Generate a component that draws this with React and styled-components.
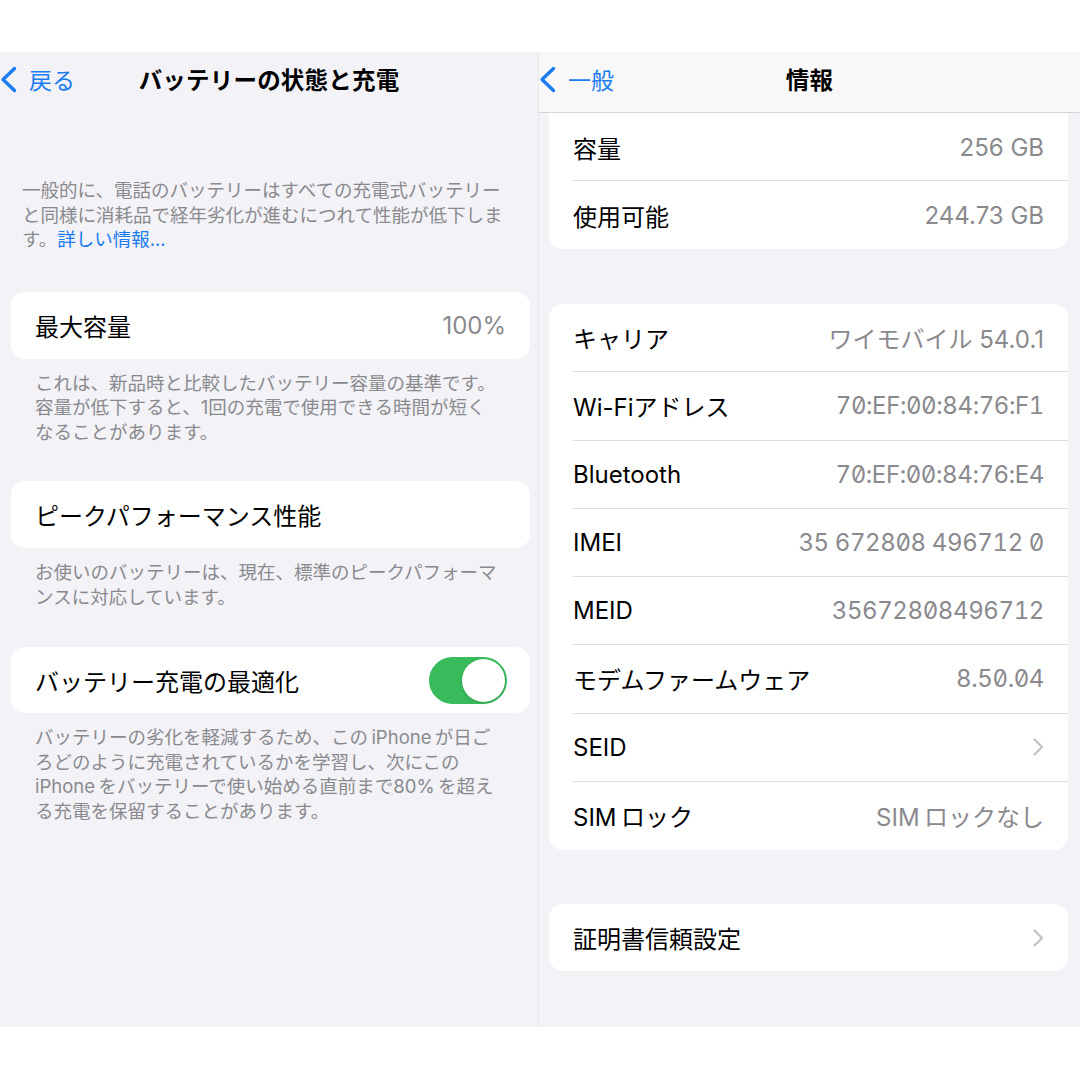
import React from "react";
import styled, { createGlobalStyle } from "styled-components";

const Global = createGlobalStyle`
  html, body { margin: 0; padding: 0; background: #ffffff; }
  body {
    font-family: Inter, "Noto Sans CJK JP", "Noto Sans", sans-serif;
    -webkit-font-smoothing: antialiased;
  }
`;

const BLUE = "#1a7cf0";
const GRAY_TEXT = "#8a8a8e";

const Page = styled.div`
  width: 1080px;
  height: 1080px;
  box-sizing: border-box;
  padding-top: 52px;
  background: #fff;
`;

const Split = styled.div`
  display: flex;
  height: 975px;
`;

const Panel = styled.section`
  width: ${(p) => p.$w}px;
  flex-shrink: 0;
  box-sizing: border-box;
  background: #f2f2f7;
  display: flex;
  flex-direction: column;
  overflow: hidden;
  border-left: ${(p) => (p.$divider ? "1px solid #e7e7ec" : "none")};
`;

const NavBar = styled.header`
  height: 61px;
  flex-shrink: 0;
  box-sizing: border-box;
  display: grid;
  grid-template-columns: 1fr auto 1fr;
  align-items: center;
  padding-bottom: 6px;
  background: ${(p) => (p.$solid ? "#f8f8f8" : "transparent")};
  border-bottom: 1px solid ${(p) => (p.$solid ? "#d5d5d8" : "transparent")};
  position: relative;
  z-index: 2;
`;

const BackButton = styled.div`
  display: flex;
  align-items: center;
  gap: ${(p) => p.$gap}px;
  color: ${BLUE};
  font-size: 23px;
  justify-self: start;
`;

const NavTitle = styled.h1`
  margin: 0;
  font-size: 23.5px;
  font-weight: 700;
  color: #000;
  letter-spacing: 0.2px;
`;

const Content = styled.div`
  flex: 1;
  display: flex;
  flex-direction: column;
  overflow: hidden;
`;

const Intro = styled.p`
  margin: 65px 0 0;
  padding: 0 22px;
  font-size: 18.5px;
  line-height: 24.5px;
  color: ${GRAY_TEXT};
`;

const Link = styled.span`
  color: ${BLUE};
`;

const Group = styled.div`
  margin-top: ${(p) => p.$mt}px;
  display: flex;
  flex-direction: column;
`;

const Card = styled.div`
  background: #fff;
  border-radius: 14px;
  margin: ${(p) => p.$m};
  padding-top: ${(p) => p.$pt || 0}px;
  overflow: hidden;
`;

const Row = styled.div`
  display: flex;
  height: ${(p) => p.$h}px;
  padding-left: 24px;
  box-sizing: border-box;
  &:last-child > div {
    border-bottom: none;
  }
`;

const RowInner = styled.div`
  flex: 1;
  display: flex;
  align-items: center;
  justify-content: space-between;
  padding-right: ${(p) => p.$pr ?? 24}px;
  border-bottom: 1px solid #dcdce0;
`;

const Label = styled.span`
  font-size: 24px;
  color: #000;
`;

const Value = styled.span`
  font-size: 24px;
  color: ${GRAY_TEXT};
  font-feature-settings: ${(p) => (p.$mono ? '"zero" 1, "tnum" 1' : "normal")};
  letter-spacing: ${(p) => (p.$mono ? "-0.4px" : "0")};
`;

const Footer = styled.p`
  margin: 0;
  padding: 12px 35px 0;
  font-size: 18.5px;
  line-height: 24.5px;
  color: ${GRAY_TEXT};
`;

const ToggleTrack = styled.div`
  width: 78px;
  height: 47px;
  border-radius: 24px;
  background: #38bb5b;
  position: relative;
  flex-shrink: 0;
`;

const ToggleKnob = styled.div`
  position: absolute;
  top: 2px;
  right: 2px;
  width: 43px;
  height: 43px;
  border-radius: 50%;
  background: #fff;
  box-shadow: 0 1px 3px rgba(0, 0, 0, 0.18);
`;

const BackChevron = () => (
  <svg width="17" height="27" viewBox="0 0 17 27">
    <polyline
      points="14.5,2.5 3,13.5 14.5,24.5"
      fill="none"
      stroke={BLUE}
      strokeWidth="3.4"
      strokeLinecap="round"
      strokeLinejoin="round"
    />
  </svg>
);

const Disclosure = () => (
  <svg width="12" height="20" viewBox="0 0 12 20">
    <polyline
      points="2.5,2.5 10,10 2.5,17.5"
      fill="none"
      stroke="#c4c4c7"
      strokeWidth="2.4"
      strokeLinecap="round"
      strokeLinejoin="round"
    />
  </svg>
);

const Toggle = () => (
  <ToggleTrack>
    <ToggleKnob />
  </ToggleTrack>
);

const T = "\u2009";

const infoRows = [
  { label: "キャリア", value: "ワイモバイル 54.0.1" },
  { label: "Wi-Fiアドレス", value: "70:EF:00:84:76:F1", mono: true },
  { label: "Bluetooth", value: "70:EF:00:84:76:E4", mono: true },
  { label: "IMEI", value: "35 672808 496712 0", mono: true },
  { label: "MEID", value: "35672808496712", mono: true },
  { label: "モデムファームウェア", value: "8.50.04", mono: true },
  { label: "SEID", chevron: true },
  { label: `SIM${T}ロック`, value: `SIM${T}ロックなし` },
];

const LEFT_CARD = "0 8px 0 11px";
const RIGHT_CARD = "0 12px 0 10px";

export default function App() {
  return (
    <>
      <Global />
      <Page>
        <Split>
          <Panel $w={538}>
            <NavBar>
              <BackButton $gap={12}>
                <BackChevron />
                <span>戻る</span>
              </BackButton>
              <NavTitle>バッテリーの状態と充電</NavTitle>
              <span />
            </NavBar>
            <Content>
              <Intro>
                一般的に、電話のバッテリーはすべての充電式バッテリー
                <br />
                と同様に消耗品で経年劣化が進むにつれて性能が低下しま
                <br />
                す。<Link>詳しい情報...</Link>
              </Intro>

              <Group $mt={40}>
                <Card $m={LEFT_CARD}>
                  <Row $h={67}>
                    <RowInner>
                      <Label>最大容量</Label>
                      <Value>100%</Value>
                    </RowInner>
                  </Row>
                </Card>
                <Footer>
                  これは、新品時と比較したバッテリー容量の基準です。
                  <br />
                  容量が低下すると、1回の充電で使用できる時間が短く
                  <br />
                  なることがあります。
                </Footer>
              </Group>

              <Group $mt={37}>
                <Card $m={LEFT_CARD}>
                  <Row $h={67}>
                    <RowInner>
                      <Label>ピークパフォーマンス性能</Label>
                    </RowInner>
                  </Row>
                </Card>
                <Footer>
                  お使いのバッテリーは、現在、標準のピークパフォーマ
                  <br />
                  ンスに対応しています。
                </Footer>
              </Group>

              <Group $mt={38}>
                <Card $m={LEFT_CARD}>
                  <Row $h={66}>
                    <RowInner $pr={23}>
                      <Label>バッテリー充電の最適化</Label>
                      <Toggle />
                    </RowInner>
                  </Row>
                </Card>
                <Footer>
                  バッテリーの劣化を軽減するため、この{T}iPhone{T}が日ご
                  <br />
                  ろどのように充電されているかを学習し、次にこの
                  <br />
                  iPhone{T}をバッテリーで使い始める直前まで80%{T}を超え
                  <br />
                  る充電を保留することがあります。
                </Footer>
              </Group>
            </Content>
          </Panel>

          <Panel $w={542} $divider>
            <NavBar $solid>
              <BackButton $gap={12}>
                <BackChevron />
                <span>一般</span>
              </BackButton>
              <NavTitle>情報</NavTitle>
              <span />
            </NavBar>
            <Content>
              <Group $mt={-12}>
                <Card $m={RIGHT_CARD} $pt={13}>
                  <Row $h={67}>
                    <RowInner>
                      <Label>容量</Label>
                      <Value>256 GB</Value>
                    </RowInner>
                  </Row>
                  <Row $h={68}>
                    <RowInner>
                      <Label>使用可能</Label>
                      <Value>244.73 GB</Value>
                    </RowInner>
                  </Row>
                </Card>
              </Group>

              <Group $mt={55}>
                <Card $m={RIGHT_CARD}>
                  {infoRows.map((r) => (
                    <Row key={r.label} $h={68.25}>
                      <RowInner>
                        <Label>{r.label}</Label>
                        {r.chevron ? (
                          <Disclosure />
                        ) : (
                          <Value $mono={r.mono}>{r.value}</Value>
                        )}
                      </RowInner>
                    </Row>
                  ))}
                </Card>
              </Group>

              <Group $mt={54}>
                <Card $m={RIGHT_CARD}>
                  <Row $h={67}>
                    <RowInner>
                      <Label>証明書信頼設定</Label>
                      <Disclosure />
                    </RowInner>
                  </Row>
                </Card>
              </Group>
            </Content>
          </Panel>
        </Split>
      </Page>
    </>
  );
}
